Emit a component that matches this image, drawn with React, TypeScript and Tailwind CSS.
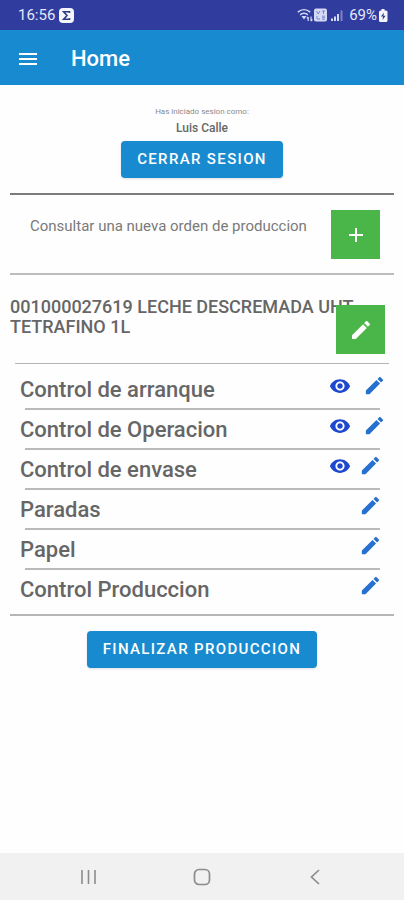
import type { ReactNode } from 'react';
import { MdAdd, MdEdit, MdMenu, MdVisibility } from 'react-icons/md';

interface ControlItem {
  name: string;
  canView: boolean;
  iconGap: string;
}

const CONTROLS: ControlItem[] = [
  { name: 'Control de arranque', canView: true, iconGap: 'gap-3 pr-2' },
  { name: 'Control de Operacion', canView: true, iconGap: 'gap-3 pr-2' },
  { name: 'Control de envase', canView: true, iconGap: 'gap-2 pr-3' },
  { name: 'Paradas', canView: false, iconGap: 'gap-2 pr-3' },
  { name: 'Papel', canView: false, iconGap: 'gap-2 pr-3' },
  { name: 'Control Produccion', canView: false, iconGap: 'gap-2 pr-3' },
];

export default function App() {
  return (
    <div className="flex min-h-screen flex-col bg-[#fefefe] font-[Roboto,sans-serif] text-[#666666]">
      <StatusBar />

      {/* App bar */}
      <header className="flex h-[55px] items-center gap-[31px] bg-[#188bd0] px-4 pt-[2px] text-white">
        <button type="button" aria-label="Menu">
          <MdMenu size={24} />
        </button>
        <h1 className="text-[22px] font-medium">Home</h1>
      </header>

      <main className="flex-1 px-[10px]">
        {/* Session */}
        <section className="flex flex-col items-center border-b-2 border-[#7b7b7b] pt-5 pb-[15px]">
          <p className="text-[8px] leading-[14px] text-[#8a8a8a]">Has iniciado sesion como:</p>
          <p className="mb-1 text-[12px] leading-[18px] font-medium">Luis Calle</p>
          <ActionButton label="CERRAR SESION" />
        </section>

        {/* New order lookup */}
        <section className="flex items-start justify-between border-b-2 border-[#bdbdbd] pt-[15px] pr-[14px] pb-[14px] pl-5">
          <p className="pt-1 text-[15px] leading-6 text-[#7a7a7a]">Consultar una nueva orden de produccion</p>
          <GreenButton label="Nueva orden">
            <MdAdd size={24} />
          </GreenButton>
        </section>

        {/* Current order */}
        <section className="relative h-[88px] pt-[22px]">
          <h2 className="pr-8 text-[18px] leading-5 font-medium">
            001000027619 LECHE DESCREMADA UHT TETRAFINO 1L
          </h2>
          <div className="absolute right-[9px] bottom-[9px]">
            <GreenButton label="Editar orden">
              <MdEdit size={24} />
            </GreenButton>
          </div>
        </section>
        <hr className="mx-[5px] border-[#b5b5b5]" />

        <ul className="border-b-2 border-[#b5b5b5] pt-[6px] pb-[6px]">
          {CONTROLS.map((item, i) => (
            <li key={item.name}>
              {i > 0 && <hr className="mr-[14px] ml-[15px] border-t-2 border-[#bababa]" />}
              <ControlRow item={item} />
            </li>
          ))}
        </ul>

        <div className="flex justify-center pt-[15px]">
          <ActionButton label="FINALIZAR PRODUCCION" />
        </div>
      </main>

      <NavigationBar />
    </div>
  );
}

function ControlRow({ item }: { item: ControlItem }) {
  return (
    <div className="flex h-[38px] items-start justify-between pl-[10px]">
      <p className="pt-2 text-[22px] leading-6 font-medium">{item.name}</p>
      <div className={`flex pt-1 ${item.iconGap}`}>
        {item.canView && (
          <button type="button" aria-label={`Ver ${item.name}`} className="text-[#1d48cf]">
            <MdVisibility size={22} />
          </button>
        )}
        <button type="button" aria-label={`Editar ${item.name}`} className="text-[#2671cf]">
          <MdEdit size={23} />
        </button>
      </div>
    </div>
  );
}

function ActionButton({ label }: { label: string }) {
  return (
    <button
      type="button"
      className="h-[37px] rounded-[4px] bg-[#188bd0] px-4 text-[15px] font-medium tracking-[0.09em] text-white shadow-sm"
    >
      {label}
    </button>
  );
}

function GreenButton({ label, children }: { label: string; children: ReactNode }) {
  return (
    <button
      type="button"
      aria-label={label}
      className="flex size-[49px] items-center justify-center bg-[#4ab548] text-white"
    >
      {children}
    </button>
  );
}

function StatusBar() {
  return (
    <div className="flex h-[30px] items-center justify-between bg-[#303d9f] pr-4 pl-[18px] text-[15px] text-[#e4e7fa]">
      <div className="flex items-center gap-1">
        <span>16:56</span>
        <svg width="15" height="15" viewBox="0 0 15 15" fill="none">
          <rect width="15" height="15" rx="4" fill="#f4f5ff" />
          <path d="M10.5 5V3.7H4.6L8 7.5l-3.4 3.8h5.9V10" stroke="#303d7f" strokeWidth="1.6" />
        </svg>
      </div>
      <div className="flex items-center gap-px">
        {/* wifi with transfer arrows */}
        <svg width="16" height="14" viewBox="0 0 16 14" fill="none" stroke="#d5d9f5" strokeWidth="1.6">
          <path d="M.8 4.2C4.500 1 9.500 1 13.200 4.200M3.200 6.800c2.200-2 5.400-2 7.600 0" />
          <path d="M4.500 8h5L7 11.500z" fill="#d5d9f5" stroke="none" />
          <path d="M11.200 13V9M9.800 10.300L11.200 8.800M14 8.500V13M15.400 11.500L14 13" strokeWidth="1.200" />
        </svg>
        {/* volte badge */}
        <svg width="14" height="14" viewBox="0 0 14 14" fill="none">
          <rect width="13" height="13" y="0.5" rx="2" fill="#d5d9f5" />
          <path d="M2.500 3l1.700 3L6 3M8 3h3M9.500 3v3M3 8v3h3M8 8.200h3M8 9.700h3M8 11.200h3" stroke="#7d88cb" />
        </svg>
        <svg width="14" height="14" viewBox="0 0 14 14" fill="#d5d9f5" className="ml-px">
          <path d="M1 10.500h2V13H1zM4 8.500h2V13H4zM7 6h2v7H7z" />
          <path d="M10.500 2.500h2V13h-2z" opacity="0.45" />
        </svg>
        <span className="ml-1">69%</span>
        <svg width="10" height="13" viewBox="0 0 10 13" fill="none">
          <path d="M3.500 0h3v1.500H8A1.500 1.500 0 0 1 9.500 3v8.500A1.500 1.500 0 0 1 8 13H2.500A1.500 1.500 0 0 1 1 11.500V3a1.500 1.500 0 0 1 1.500-1.500h1z" fill="#f4f5ff" />
          <path d="M5.800 3.500L3 7.600h2L4.600 11l3-4.300H5.500z" fill="#303d7f" />
        </svg>
      </div>
    </div>
  );
}

function NavigationBar() {
  return (
    <nav className="flex h-[47px] items-center justify-between bg-[#f1f1f1] px-[78px] text-[#8c8c8c]">
      <button type="button" aria-label="Recientes">
        <svg width="20" height="20" viewBox="0 0 20 20" fill="none" stroke="currentColor" strokeWidth="1.6">
          <path d="M4 3v14M10.500 3v14M17 3v14" />
        </svg>
      </button>
      <button type="button" aria-label="Inicio">
        <svg width="20" height="20" viewBox="0 0 20 20" fill="none" stroke="currentColor" strokeWidth="1.7">
          <rect x="2.5" y="2.5" width="15" height="15" rx="4.5" />
        </svg>
      </button>
      <button type="button" aria-label="Atras">
        <svg width="20" height="20" viewBox="0 0 20 20" fill="none" stroke="currentColor" strokeWidth="1.7">
          <path d="M13 3L5.500 10l7.500 7" />
        </svg>
      </button>
    </nav>
  );
}
